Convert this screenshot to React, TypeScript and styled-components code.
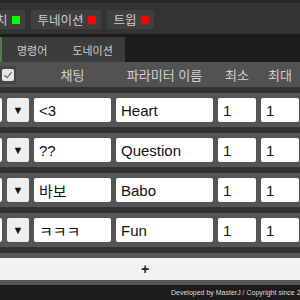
import styled, { createGlobalStyle } from "styled-components";

const GlobalStyle = createGlobalStyle`
  html, body {
    margin: 0;
    padding: 0;
    background: #1c1c1c;
  }
  body {
    font-family: "Liberation Sans", "Noto Sans CJK KR", sans-serif;
    overflow: hidden;
  }
`;

const services = [
  { name: "트위치", on: true },
  { name: "투네이션", on: false },
  { name: "트윕", on: false },
];

const tabs = [
  { label: "명령어", active: true },
  { label: "도네이션", active: false },
];

const rows = [
  { chat: "<3", param: "Heart", min: 1, max: 1 },
  { chat: "??", param: "Question", min: 1, max: 1 },
  { chat: "바보", param: "Babo", min: 1, max: 1 },
  { chat: "ㅋㅋㅋ", param: "Fun", min: 1, max: 1 },
];

/** donation command editor */
const App = () => {
  return <Page>
    <GlobalStyle />
    <TopBar>
      <ServiceRow>
        {services.map((s) => (
          <ServiceButton key={s.name}>
            {s.name}
            <StatusDot $on={s.on} />
          </ServiceButton>
        ))}
      </ServiceRow>
    </TopBar>

    <TabBar>
      {tabs.map((t) => (
        <Tab key={t.label} $active={t.active}>{t.label}</Tab>
      ))}
    </TabBar>

    <TablePanel>
      <TableInner>
        <HeaderRow>
          <CheckCell>
            <CheckBox>
              <svg width="10" height="10" viewBox="0 0 10 10">
                <path d="M1.5 5.2 L4 7.6 L8.6 2.2" fill="none" stroke="#666" strokeWidth="1.3" />
              </svg>
            </CheckBox>
          </CheckCell>
          <HeaderCell>채팅</HeaderCell>
          <HeaderCell>파라미터 이름</HeaderCell>
          <HeaderCell>최소</HeaderCell>
          <HeaderCell>최대</HeaderCell>
          <HeaderCell />
        </HeaderRow>

        {rows.map((r) => (
          <Row key={r.param}>
            <TextField defaultValue="" readOnly />
            <DropButton>▼</DropButton>
            <TextField defaultValue={r.chat} readOnly />
            <TextField defaultValue={r.param} readOnly />
            <TextField defaultValue={String(r.min)} readOnly />
            <TextField defaultValue={String(r.max)} readOnly />
            <DropButton>✕</DropButton>
          </Row>
        ))}

        <AddRow>
          <AddButton>+</AddButton>
        </AddRow>
      </TableInner>
    </TablePanel>

    <Footer>Developed by MasterJ / Copyright since 2019</Footer>
  </Page>
}

export default App;

const Page = styled.div`
  display: flex;
  flex-direction: column;
  width: 300px;
  height: 300px;
  overflow: hidden;
  background: #1c1c1c;
`

const TopBar = styled.div`
  flex-shrink: 0;
  box-sizing: border-box;
  height: 34px;
  padding-top: 7px;
  border-top: 3px solid #272727;
  background: #333333;
  overflow: hidden;
`

const ServiceRow = styled.div`
  display: flex;
  gap: 6px;
  margin-left: -34px; //scrolled
`

const ServiceButton = styled.div`
  display: flex;
  align-items: center;
  flex-shrink: 0;
  gap: 4px;
  height: 19px;
  padding: 0 5px 0 7px;
  background: #3f3f3f;
  color: #cdcdcd;
  font-size: 12.5px;
  white-space: nowrap;
`

const StatusDot = styled.span<{ $on: boolean }>`
  width: 8px;
  height: 8px;
  background: ${(p) => (p.$on ? "#00ff00" : "#ff0000")};
`

const TabBar = styled.div`
  display: flex;
  flex-shrink: 0;
  height: 25px;
  margin-top: 3px;
`

const Tab = styled.div<{ $active: boolean }>`
  display: flex;
  align-items: center;
  padding: 0 12px 0 ${(p) => (p.$active ? "15px" : "13px")};
  border-left: ${(p) => (p.$active ? "2px solid #4e7d4e" : "none")};
  background: #3c3c3c;
  color: #cdcdcd;
  font-size: 11px;
`

const TablePanel = styled.div`
  flex-shrink: 0;
  background: #333333;
  overflow: hidden;
`

const TableInner = styled.div`
  display: flex;
  flex-direction: column;
  gap: 6px;
  width: 366px;
  margin-left: -38px; //scrolled
`

const columns = "40px 22px 77px 97px 38px 38px 24px";

const HeaderRow = styled.div`
  display: grid;
  grid-template-columns: ${columns};
  column-gap: 5px;
  align-items: center;
  height: 25px;
  background: #525252;
`

const HeaderCell = styled.div`
  color: #d0d0d0;
  font-size: 13px;
  text-align: center;
  white-space: nowrap;
`

const CheckCell = styled.div`
  grid-column: 1 / 3;
  justify-self: end;
  display: flex;
  justify-content: center;
  align-items: center;
  width: 16px;
  height: 18px;
  margin-right: 13px;
  background: #454545;
`

const CheckBox = styled.div`
  display: flex;
  justify-content: center;
  align-items: center;
  width: 12px;
  height: 12px;
  border-radius: 2px;
  background: #e6e6e6;
`

const Row = styled.div`
  display: grid;
  grid-template-columns: ${columns};
  column-gap: 5px;
  padding: 5px 0;
  background: #555555;
`

const TextField = styled.input`
  box-sizing: border-box;
  width: 100%;
  height: 24px;
  padding: 0 5px;
  border: none;
  border-radius: 2px;
  outline: none;
  background: #ffffff;
  color: #111111;
  font-family: "Liberation Sans", "Noto Sans CJK KR", sans-serif;
  font-size: 15px;
`

const DropButton = styled.button`
  display: flex;
  justify-content: center;
  align-items: center;
  height: 24px;
  padding: 0;
  border: none;
  border-radius: 2px;
  background: #efefef;
  color: #111111;
  font-family: "Liberation Sans", sans-serif;
  font-size: 11px;
`

const AddRow = styled.div`
  padding: 5px 0;
  background: #555555;
`

const AddButton = styled.button`
  display: block;
  width: 100%;
  height: 22px;
  border: none;
  border-radius: 2px;
  background: #f2f2f2;
  color: #222222;
  font-family: "Liberation Sans", sans-serif;
  font-size: 14px;
  font-weight: bold;
`

const Footer = styled.div`
  flex-shrink: 0;
  height: 15px;
  padding-left: 171px;
  line-height: 15px;
  background: #1c1c1c;
  color: #dddddd;
  font-size: 7px;
  white-space: nowrap;
  overflow: hidden;
`
